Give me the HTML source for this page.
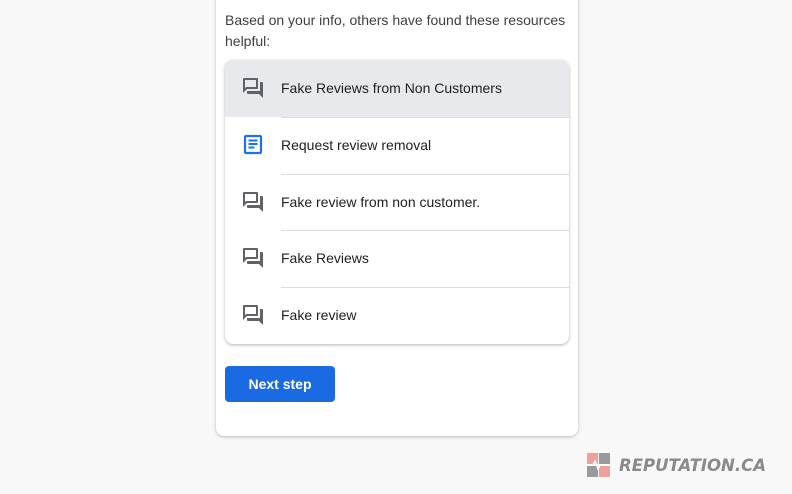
<!DOCTYPE html>
<html><head><meta charset="utf-8"><style>
*{margin:0;padding:0;box-sizing:border-box}
body{width:792px;height:494px;background:#f8f8f8;font-family:"Liberation Sans",Arial,sans-serif;position:relative;overflow:hidden}
.card{position:absolute;left:216px;top:-10px;width:362px;height:446px;background:#fff;border-radius:0 0 8px 8px;box-shadow:0 1px 3px rgba(0,0,0,.25)}
.intro{position:absolute;left:225px;top:10px;width:345px;font-size:14px;line-height:21px;color:#3c4043}
.list{position:absolute;left:225px;top:60px;width:344px;height:284px;border-radius:8px;background:#fff;box-shadow:0 1px 3px rgba(0,0,0,.3);overflow:hidden}
.row{position:relative;height:56.8px}
.row.hl{background:#e8e9ec}
.row+.row:before{content:"";position:absolute;left:56px;right:0;top:0;border-top:1px solid #dadce0}
.row svg{position:absolute;left:16px;top:16px}
.row span{position:absolute;left:56px;top:20px;font-size:14px;color:#202124}
.btn{position:absolute;left:225px;top:366px;width:110px;height:36px;background:#1a6ae4;border-radius:4px;color:#fff;font-size:14px;font-weight:bold;text-align:center;line-height:36px}
.logo{position:absolute;left:587px;top:453px;display:flex;align-items:center}
.logo b{font-style:italic;font-weight:900;font-size:16.5px;color:#8a8a8a;margin-left:9px;letter-spacing:0;font-family:"DejaVu Sans","Liberation Sans",sans-serif}
</style></head><body>
<div class="card"></div>
<div class="intro">Based on your info, others have found these resources helpful:</div>
<div class="list">
<div class="row hl"><svg width="24" height="24" viewBox="0 0 24 24"><path d="M15 4v7H5.17L4 12.17V4h11m1-2H3c-.55 0-1 .45-1 1v14l4-4h10c.55 0 1-.45 1-1V3c0-.55-.45-1-1-1zm5 4h-2v9H6v2c0 .55.45 1 1 1h11l4 4V7c0-.55-.45-1-1-1z" fill="#5f6368"/></svg><span>Fake Reviews from Non Customers</span></div>
<div class="row"><svg width="24" height="24" viewBox="0 0 24 24"><rect x="4" y="3" width="16" height="17" rx="1" fill="none" stroke="#1a73e8" stroke-width="2.2"/><path d="M7.5 7.5h9M7.5 11h9M7.5 14.5h6" stroke="#1a73e8" stroke-width="2"/></svg><span>Request review removal</span></div>
<div class="row"><svg width="24" height="24" viewBox="0 0 24 24"><path d="M15 4v7H5.17L4 12.17V4h11m1-2H3c-.55 0-1 .45-1 1v14l4-4h10c.55 0 1-.45 1-1V3c0-.55-.45-1-1-1zm5 4h-2v9H6v2c0 .55.45 1 1 1h11l4 4V7c0-.55-.45-1-1-1z" fill="#5f6368"/></svg><span>Fake review from non customer.</span></div>
<div class="row"><svg width="24" height="24" viewBox="0 0 24 24"><path d="M15 4v7H5.17L4 12.17V4h11m1-2H3c-.55 0-1 .45-1 1v14l4-4h10c.55 0 1-.45 1-1V3c0-.55-.45-1-1-1zm5 4h-2v9H6v2c0 .55.45 1 1 1h11l4 4V7c0-.55-.45-1-1-1z" fill="#5f6368"/></svg><span>Fake Reviews</span></div>
<div class="row"><svg width="24" height="24" viewBox="0 0 24 24"><path d="M15 4v7H5.17L4 12.17V4h11m1-2H3c-.55 0-1 .45-1 1v14l4-4h10c.55 0 1-.45 1-1V3c0-.55-.45-1-1-1zm5 4h-2v9H6v2c0 .55.45 1 1 1h11l4 4V7c0-.55-.45-1-1-1z" fill="#5f6368"/></svg><span>Fake review</span></div>
</div>
<div class="btn">Next step</div>
<div class="logo"><svg width="23" height="24" viewBox="0 0 23 24"><rect x="0" y="0" width="11" height="11" fill="#f0a09a"/><rect x="12" y="0" width="11" height="11" fill="#9a9a9a"/><rect x="0" y="13" width="11" height="11" fill="#9a9a9a"/><rect x="12" y="13" width="11" height="11" fill="#f0a09a"/><path d="M0 12h6l2-4 3 8 2-4h10" stroke="#fff" stroke-width="1.5" fill="none"/></svg><b>REPUTATION.CA</b></div>
</body></html>
